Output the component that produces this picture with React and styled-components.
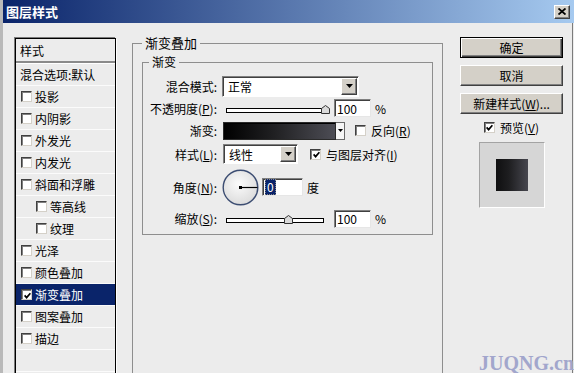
import styled, { createGlobalStyle } from "styled-components";

const Global = createGlobalStyle`
  html, body { margin: 0; padding: 0; }
  body {
    background: #bfbfbf;
    font-family: "Noto Sans CJK SC", "Liberation Sans", sans-serif;
    font-size: 12px;
    color: #000;
  }
`;

const styles = [
  { name: "投影" },
  { name: "内阴影" },
  { name: "外发光" },
  { name: "内发光" },
  { name: "斜面和浮雕" },
  { name: "等高线", indent: true },
  { name: "纹理", indent: true },
  { name: "光泽" },
  { name: "颜色叠加" },
  { name: "渐变叠加", selected: true, checked: true },
  { name: "图案叠加" },
  { name: "描边" },
];

function Tick() {
  return (
    <svg width="7" height="7" viewBox="0 0 7 7">
      <polyline points="0.6,3.4 2.6,5.6 6.4,1.2" fill="none" stroke="#000" strokeWidth="1.7" />
    </svg>
  );
}

function CheckBox({ checked }) {
  return <Check>{checked && <Tick />}</Check>;
}

function Arrow({ w = 7, h = 4 }) {
  return (
    <svg width={w} height={h} viewBox={`0 0 ${w} ${h}`}>
      <polygon points={`0,0 ${w},0 ${w / 2},${h}`} fill="#000" />
    </svg>
  );
}

function Slider({ width, pos }) {
  return (
    <Track $width={width}>
      <Thumb style={{ left: Math.round(pos * (width - 9)) }}>
        <svg width="9" height="9" viewBox="0 0 9 9">
          <polygon points="0.5,3.5 4.5,0.5 8.5,3.5 8.5,8.5 0.5,8.5" fill="#d9d9d9" stroke="#333" />
        </svg>
      </Thumb>
    </Track>
  );
}

function Dial() {
  return (
    <svg width="37" height="39" viewBox="0 0 37 39">
      <defs>
        <radialGradient id="dialFill" cx="0.45" cy="0.4" r="0.6">
          <stop offset="0" stopColor="#fbfbfb" />
          <stop offset="1" stopColor="#dcdcdc" />
        </radialGradient>
      </defs>
      <circle cx="18.5" cy="19.5" r="17.3" fill="url(#dialFill)" stroke="#3c4d72" strokeWidth="1.4" />
      <line x1="18.5" y1="19.5" x2="35.5" y2="19.5" stroke="#000" strokeWidth="1.2" />
      <rect x="17" y="18" width="3" height="3" fill="#000" />
    </svg>
  );
}

export default function App() {
  return (
    <>
      <Global />
      <Page>
        <Dialog>
          <TitleBar>
            <Title>图层样式</Title>
            <CloseButton>
              <svg width="8" height="7" viewBox="0 0 8 7">
                <path d="M0.5 0.5 L7.5 6.5 M7.5 0.5 L0.5 6.5" stroke="#000" strokeWidth="1.8" />
              </svg>
            </CloseButton>
          </TitleBar>

          <Body>
            <StyleList>
              <ListHeader>样式</ListHeader>
              <ListItem $pad={4}>混合选项:默认</ListItem>
              {styles.map((s) => (
                <ListItem key={s.name} $pad={s.indent ? 20 : 5} $selected={s.selected}>
                  <CheckBox checked={s.checked} />
                  <span>{s.name}</span>
                </ListItem>
              ))}
              <ListItem />
              <ListItem />
            </StyleList>

            <OuterGroup>
              <Legend $size={13} $offset={9}>渐变叠加</Legend>
              <InnerGroup>
                <Legend $size={12} $offset={6}>渐变</Legend>
                <FormGrid>
                  <Label>混合模式:</Label>
                  <Controls>
                    <Select $width={137} $height={21}>
                      <SelectText>正常</SelectText>
                      <DropBtn><Arrow /></DropBtn>
                    </Select>
                  </Controls>

                  <Label>不透明度(<u>P</u>):</Label>
                  <Controls>
                    <Spacer $w={4} />
                    <Slider width={103} pos={1} />
                    <Input $width={37} $ml={5}>100</Input>
                    <Unit $ml={4}>%</Unit>
                  </Controls>

                  <Label>渐变:</Label>
                  <Controls>
                    <Spacer $w={1} />
                    <Swatch />
                    <GradBtn><Arrow w={5} h={3} /></GradBtn>
                    <CheckLabel $ml={10}>
                      <CheckBox />
                      <span>反向(<u>R</u>)</span>
                    </CheckLabel>
                  </Controls>

                  <Label>样式(<u>L</u>):</Label>
                  <Controls>
                    <Spacer $w={1} />
                    <Select $width={75} $height={20}>
                      <SelectText>线性</SelectText>
                      <DropBtn><Arrow /></DropBtn>
                    </Select>
                    <CheckLabel $ml={12}>
                      <CheckBox checked />
                      <span>与图层对齐(<u>I</u>)</span>
                    </CheckLabel>
                  </Controls>

                  <Label>角度(<u>N</u>):</Label>
                  <Controls>
                    <Dial />
                    <Input $width={41} $ml={3}>
                      <Selected>0</Selected>
                    </Input>
                    <Unit $ml={4}>度</Unit>
                  </Controls>

                  <Label>缩放(<u>S</u>):</Label>
                  <Controls>
                    <Spacer $w={4} />
                    <Slider width={98} pos={0.64} />
                    <Input $width={37} $ml={10}>100</Input>
                    <Unit $ml={4}>%</Unit>
                  </Controls>
                </FormGrid>
              </InnerGroup>
            </OuterGroup>

            <ButtonColumn>
              <Button $default>确定</Button>
              <Button>取消</Button>
              <Button>新建样式(<u>W</u>)...</Button>
              <PreviewCheck>
                <CheckBox checked />
                <span>预览(<u>V</u>)</span>
              </PreviewCheck>
              <PreviewBox>
                <PreviewSwatch />
              </PreviewBox>
            </ButtonColumn>
          </Body>
        </Dialog>
        <Watermark>JUQNG.cn</Watermark>
      </Page>
    </>
  );
}

const Page = styled.div`
  position: relative;
  width: 574px;
  height: 373px;
  overflow: hidden;
  display: flex;
  padding-left: 3px;
  box-sizing: border-box;
  background: #b9b9b9;
`;

const Dialog = styled.div`
  flex: 1;
  display: flex;
  flex-direction: column;
  background: #ececec;
`;

const TitleBar = styled.div`
  height: 23px;
  flex-shrink: 0;
  display: flex;
  align-items: center;
  justify-content: space-between;
  padding: 0 4px 0 3px;
  background: linear-gradient(to right, #0a246a, #a6caf0);
`;

const Title = styled.div`
  color: #fff;
  font-weight: bold;
  font-size: 13px;
  line-height: 1;
`;

const CloseButton = styled.div`
  width: 16px;
  height: 14px;
  box-sizing: border-box;
  background: #d4d0c8;
  border: 1px solid;
  border-color: #fff #404040 #404040 #fff;
  box-shadow: inset -1px -1px 0 #808080;
  display: flex;
  align-items: center;
  justify-content: center;
`;

const Body = styled.div`
  flex: 1;
  display: flex;
  align-items: flex-start;
  padding-left: 12px;
  margin-right: 1px;
  border-right: 1px solid #7c7c7c;
`;

const StyleList = styled.div`
  margin-top: 15px;
  width: 101px;
  height: 420px;
  flex-shrink: 0;
  box-sizing: border-box;
  border: 1px solid #000;
  box-shadow: -1px -1px 0 #7a7a7a, 1px 1px 0 #fff;
`;

const ListHeader = styled.div`
  height: 24px;
  box-sizing: border-box;
  display: flex;
  align-items: center;
  padding-left: 4px;
  border-bottom: 2px solid #8a8a8a;
  margin-bottom: 1px;
  box-shadow: 0 1px 0 #fff;
`;

const ListItem = styled.div`
  height: 22px;
  box-sizing: border-box;
  display: flex;
  align-items: center;
  gap: 3px;
  padding-left: ${(p) => p.$pad || 0}px;
  border-bottom: 1px solid #fbfbfb;
  background: ${(p) => (p.$selected ? "#0a246a" : "transparent")};
  color: ${(p) => (p.$selected ? "#fff" : "#000")};
  white-space: nowrap;
`;

const Check = styled.span`
  width: 11px;
  height: 11px;
  flex-shrink: 0;
  box-sizing: border-box;
  background: #fff;
  border: 1px solid;
  border-color: #404040 #d4d0c8 #d4d0c8 #404040;
  box-shadow: inset 1px 1px 0 #808080;
  display: flex;
  align-items: center;
  justify-content: center;
  padding: 1px 0 0 1px;
`;

const OuterGroup = styled.fieldset`
  margin: 12px 0 0 16px;
  padding: 3px 0 0 0;
  width: 311px;
  min-width: 0;
  height: 420px;
  flex-shrink: 0;
  box-sizing: border-box;
  border: 1px solid #8e8e8e;
`;

const Legend = styled.legend`
  font-size: ${(p) => p.$size}px;
  line-height: 16px;
  padding: 0 3px;
  margin-left: ${(p) => p.$offset}px;
`;

const InnerGroup = styled.fieldset`
  margin: 0 0 0 9px;
  padding: 5px 0 5px 0;
  width: 291px;
  min-width: 0;
  box-sizing: border-box;
  border: 1px solid #8e8e8e;
`;

const FormGrid = styled.div`
  display: grid;
  grid-template-columns: 74px 1fr;
  grid-template-rows: 22px 22px 23px 24px 42px 21px;
  column-gap: 5px;
  align-items: center;
`;

const Label = styled.div`
  text-align: right;
  white-space: nowrap;
`;

const Controls = styled.div`
  display: flex;
  align-items: center;
  white-space: nowrap;
`;

const Spacer = styled.span`
  width: ${(p) => p.$w}px;
  flex-shrink: 0;
`;

const Select = styled.div`
  width: ${(p) => p.$width}px;
  height: ${(p) => p.$height}px;
  box-sizing: border-box;
  display: flex;
  background: #fff;
  border: 1px solid;
  border-color: #808080 #fff #fff #808080;
  box-shadow: inset 1px 1px 0 #404040;
  padding: 1px 1px 1px 1px;
`;

const SelectText = styled.div`
  flex: 1;
  display: flex;
  align-items: center;
  padding-left: 4px;
`;

const DropBtn = styled.div`
  width: 16px;
  box-sizing: border-box;
  background: #d4d0c8;
  border: 1px solid;
  border-color: #fff #404040 #404040 #fff;
  box-shadow: inset -1px -1px 0 #808080;
  display: flex;
  align-items: center;
  justify-content: center;
`;

const Track = styled.div`
  position: relative;
  width: ${(p) => p.$width}px;
  height: 5px;
  margin-top: 4px;
  box-sizing: border-box;
  border: 1px solid #000;
  background: #fff;
  flex-shrink: 0;
`;

const Thumb = styled.div`
  position: absolute;
  top: -4px;
  width: 9px;
  height: 9px;
  display: flex;
`;

const Input = styled.div`
  width: ${(p) => p.$width}px;
  height: 18px;
  margin-left: ${(p) => p.$ml || 0}px;
  box-sizing: border-box;
  background: #fff;
  border: 1px solid;
  border-color: #7f7f7f #e6e6e6 #e6e6e6 #7f7f7f;
  box-shadow: inset 1px 1px 0 #404040;
  display: flex;
  align-items: center;
  padding-left: 2px;
  flex-shrink: 0;
`;

const Selected = styled.span`
  background: #0a246a;
  color: #fff;
  padding: 0 1px;
  line-height: 14px;
  border: 1px dotted #888;
`;

const Unit = styled.span`
  margin-left: ${(p) => p.$ml || 0}px;
`;

const Swatch = styled.div`
  width: 113px;
  height: 18px;
  box-sizing: border-box;
  border: 1px solid #2a2a2a;
  box-shadow: inset 1px 1px 0 #000;
  background: linear-gradient(to right, #000 0%, #202022 45%, #4d4d55 100%);
  flex-shrink: 0;
`;

const GradBtn = styled.div`
  width: 9px;
  height: 18px;
  box-sizing: border-box;
  background: #f6f6f6;
  border: 1px solid #6a6a6a;
  border-left: none;
  display: flex;
  align-items: center;
  justify-content: center;
  flex-shrink: 0;
`;

const CheckLabel = styled.div`
  display: flex;
  align-items: center;
  gap: 5px;
  margin-left: ${(p) => p.$ml || 0}px;
`;

const ButtonColumn = styled.div`
  margin: 14px 0 0 17px;
  width: 103px;
  flex-shrink: 0;
  display: flex;
  flex-direction: column;
  gap: 7px;
`;

const Button = styled.div`
  height: 21px;
  box-sizing: border-box;
  background: #d4d0c8;
  border: 1px solid;
  border-color: ${(p) => (p.$default ? "#000" : "#fff #404040 #404040 #fff")};
  box-shadow: ${(p) =>
    p.$default
      ? "inset 1px 1px 0 #fff, inset -1px -1px 0 #404040, inset -2px -2px 0 #808080"
      : "inset -1px -1px 0 #808080"};
  display: flex;
  align-items: center;
  justify-content: center;
  white-space: nowrap;
`;

const PreviewCheck = styled.div`
  margin-top: -2px;
  height: 16px;
  display: flex;
  align-items: center;
  justify-content: center;
  gap: 5px;
`;

const PreviewBox = styled.div`
  align-self: center;
  width: 66px;
  height: 66px;
  box-sizing: border-box;
  background: #d6d6d6;
  border: 1px solid;
  border-color: #a3a3a3 #fff #fff #a3a3a3;
  display: flex;
  align-items: center;
  justify-content: center;
`;

const PreviewSwatch = styled.div`
  width: 32px;
  height: 32px;
  background: linear-gradient(to right, #0f0f10 0%, #1e1e20 40%, #46464e 100%);
`;

const Watermark = styled.div`
  position: absolute;
  right: 0;
  bottom: 0;
  font-family: "Liberation Serif", serif;
  font-weight: bold;
  font-size: 20px;
  line-height: 20px;
  color: #a2a6cc;
`;
